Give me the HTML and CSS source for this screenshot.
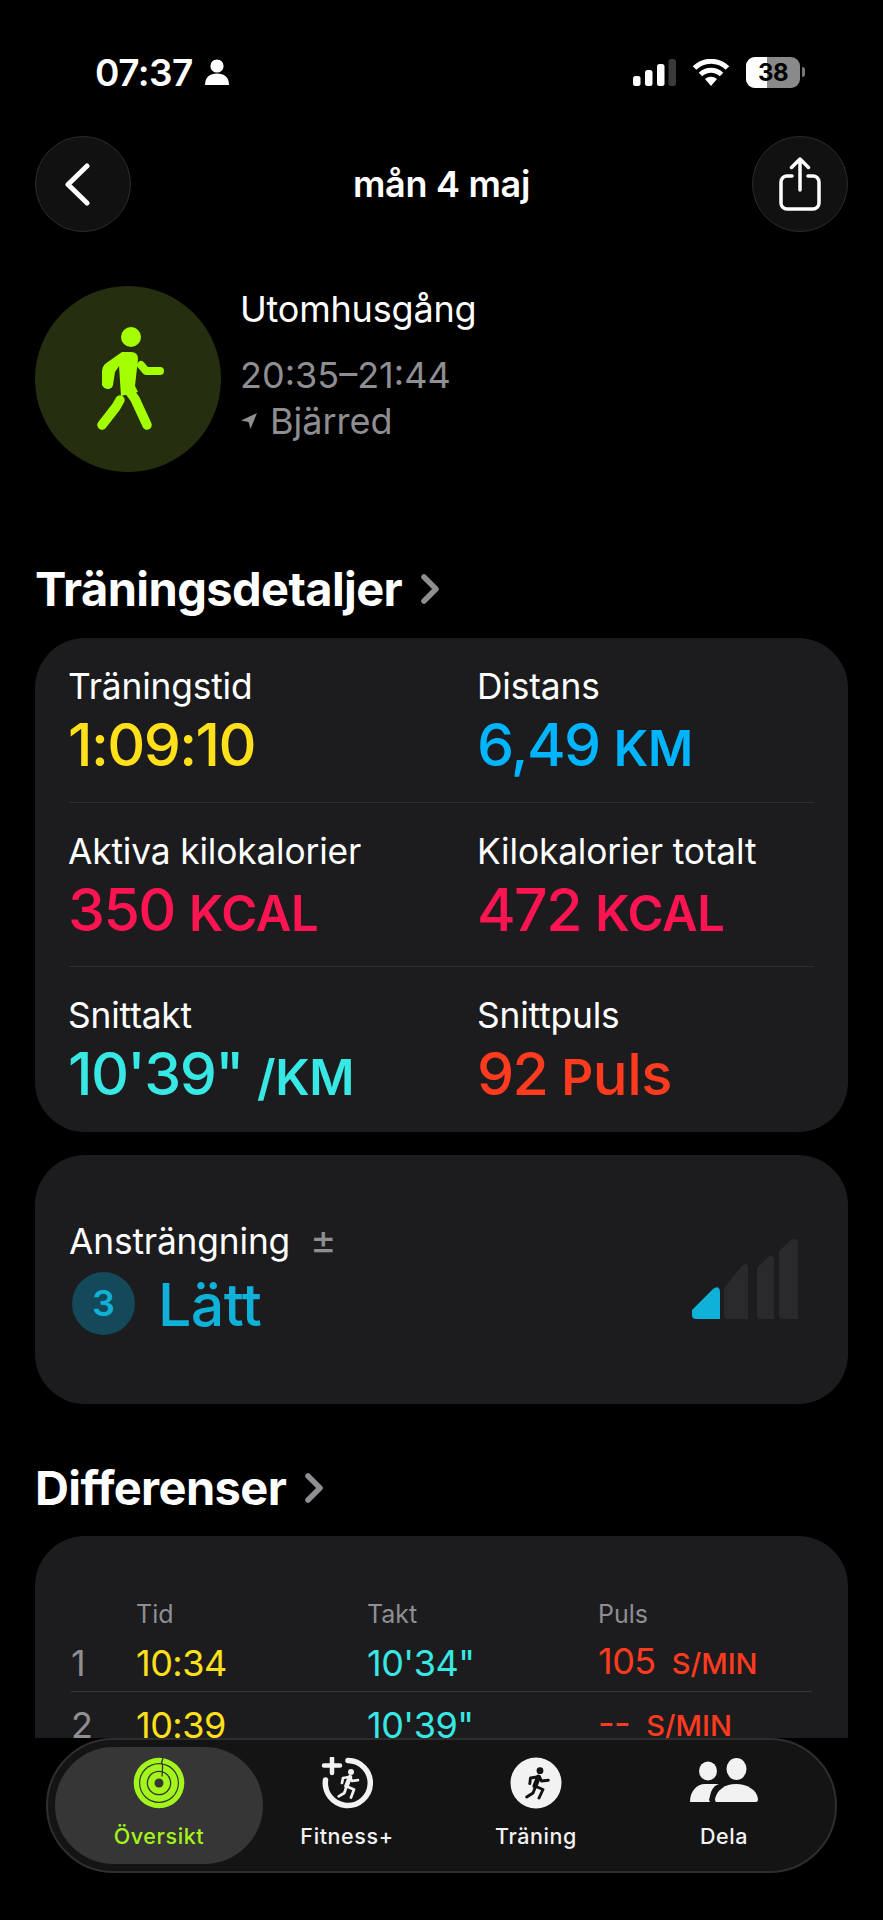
FILE: index.html
```html
<!DOCTYPE html>
<html lang="sv">
<head>
<meta charset="utf-8">
<title>Utomhusgång</title>
<link rel="stylesheet" href="styles.css">
</head>
<body>
<div class="screen">
  <div class="scroll">
    <div class="status">
      <div class="status-left">
        <span class="clock">07:37</span>
        <svg class="person" viewBox="0 0 26 26"><circle cx="13" cy="7" r="6.6"/><path d="M1 26c0-8 5-11.500 12-11.500S25 18 25 26z"/></svg>
      </div>
      <div class="status-right">
        <svg class="signal" viewBox="0 0 43 27"><rect x="0" y="17" width="7.500" height="10" rx="2.500" fill="#fff"/><rect x="12" y="11" width="7.500" height="16" rx="2.500" fill="#fff"/><rect x="24" y="5" width="7.500" height="22" rx="2.500" fill="#fff"/><rect x="35.500" y="0" width="7.500" height="27" rx="2.500" fill="#3a3a3c"/></svg>
        <svg class="wifi" viewBox="0 0 38 27"><path d="M19 27l-6-7a9 9 0 0 1 12 0z" fill="#fff"/><path d="M8.500 15.500a15 15 0 0 1 21 0" stroke="#fff" stroke-width="5" fill="none"/><path d="M2.500 9a23.500 23.500 0 0 1 33 0" stroke="#fff" stroke-width="5" fill="none"/></svg>
        <div class="battery"><span class="battery-level"></span><span class="battery-num">38</span></div>
        <span class="battery-tip"></span>
      </div>
    </div>

    <div class="nav">
      <button class="round-btn">
        <svg class="back-icon" viewBox="0 0 27 43"><path d="M23 3 4 21.500 23 40" fill="none" stroke="#fff" stroke-width="5" stroke-linecap="round" stroke-linejoin="round"/></svg>
      </button>
      <div class="nav-title">mån 4 maj</div>
      <button class="round-btn">
        <svg class="share-icon" viewBox="0 0 42 54"><path d="M13 19H8a6 6 0 0 0-6 6v21a6 6 0 0 0 6 6h26a6 6 0 0 0 6-6V25a6 6 0 0 0-6-6h-5" fill="none" stroke="#fff" stroke-width="3.500" stroke-linecap="round"/><path d="M21 33V3M12.500 10.500 21 2l8.500 8.500" fill="none" stroke="#fff" stroke-width="3.500" stroke-linecap="round" stroke-linejoin="round"/></svg>
      </button>
    </div>

    <div class="workout">
      <div class="workout-badge">
        <svg viewBox="0 0 186 186" class="walker">
          <circle cx="96" cy="51" r="10"/>
          <path d="M87 66h9q7 0 7 7l-3 27 3 6-17 4-2-30-4 6-2 13q-1 4-5 4t-6-4v-14q0-4 3-7z"/>
          <path d="M106 79l5 6h14" fill="none" stroke="#a4ff00" stroke-width="8" stroke-linecap="round" stroke-linejoin="round"/>
          <path d="M92 102l8 11 12 26" fill="none" stroke="#a4ff00" stroke-width="9.500" stroke-linecap="round" stroke-linejoin="round"/>
          <path d="M85 114l-4 7-14 18" fill="none" stroke="#a4ff00" stroke-width="9.500" stroke-linecap="round" stroke-linejoin="round"/>
        </svg>
      </div>
      <div class="workout-info">
        <div class="workout-name">Utomhusgång</div>
        <div class="workout-time">20:35–21:44</div>
        <div class="workout-place">
          <svg class="loc-icon" viewBox="0 0 18 18"><path d="M17 1 1 8.500l7.500 1.500L10.500 17z" fill="#8e8e93"/></svg>
          Bjärred
        </div>
      </div>
    </div>

    <h2 class="section-title section-first">Träningsdetaljer <svg class="chev" viewBox="0 0 20 32"><path d="M4 4l12 12L4 28" fill="none" stroke="#8e8e93" stroke-width="5.500" stroke-linecap="round" stroke-linejoin="round"/></svg></h2>

    <div class="card details">
      <div class="metric-row">
        <div class="metric"><div class="metric-label">Träningstid</div><div class="metric-value c-yellow">1:09:10</div></div>
        <div class="metric"><div class="metric-label">Distans</div><div class="metric-value c-blue">6,49 <span class="unit">KM</span></div></div>
      </div>
      <div class="metric-row">
        <div class="metric"><div class="metric-label">Aktiva kilokalorier</div><div class="metric-value c-pink">350 <span class="unit">KCAL</span></div></div>
        <div class="metric"><div class="metric-label">Kilokalorier totalt</div><div class="metric-value c-pink">472 <span class="unit">KCAL</span></div></div>
      </div>
      <div class="metric-row">
        <div class="metric"><div class="metric-label">Snittakt</div><div class="metric-value c-cyan">10'39" <span class="unit">/KM</span></div></div>
        <div class="metric"><div class="metric-label">Snittpuls</div><div class="metric-value c-red">92 <span class="unit">P</span><span class="unit-lower">uls</span></div></div>
      </div>
    </div>

    <div class="card effort">
      <div>
        <div class="metric-label">Ansträngning <span class="plusminus">±</span></div>
        <div class="effort-value">
          <span class="effort-num">3</span>
          <span class="effort-text">Lätt</span>
        </div>
      </div>
      <svg class="effort-bars" viewBox="0 0 106 81">
        <path d="M0 72l21-21q7-5 7 4v26H4q-4 0-4-4z" fill="#0fb1d8"/>
        <path d="M32 50 50 28q6-5 6 3v50H36q-4 0-4-4z" fill="#2a2a2d"/>
        <path d="M65 30 76 19q6-3 6 3v59H69q-4 0-4-4z" fill="#2a2a2d"/>
        <path d="M87 13 99 2q7-3 7 3v76H91q-4 0-4-4z" fill="#2a2a2d"/>
      </svg>
    </div>

    <h2 class="section-title section-second">Differenser <svg class="chev" viewBox="0 0 20 32"><path d="M4 4l12 12L4 28" fill="none" stroke="#8e8e93" stroke-width="5.500" stroke-linecap="round" stroke-linejoin="round"/></svg></h2>

    <div class="card splits">
      <div class="split-head">
        <span></span><span>Tid</span><span>Takt</span><span>Puls</span>
      </div>
      <div class="split-row">
        <span class="split-idx">1</span><span class="c-yellow">10:34</span><span class="c-cyan">10'34"</span>
        <span class="c-red">105<span class="split-unit">S/MIN</span></span>
      </div>
      <div class="split-row">
        <span class="split-idx">2</span><span class="c-yellow">10:39</span><span class="c-cyan">10'39"</span>
        <span class="c-red">--<span class="split-unit">S/MIN</span></span>
      </div>
    </div>
  </div>

  <nav class="tabbar">
    <div class="tab tab-active">
      <svg class="tab-icon" viewBox="0 0 52 52">
        <circle cx="26" cy="26" r="25.300" fill="#a4f51b"/>
        <circle cx="26" cy="26" r="20" fill="#363636"/>
        <circle cx="26" cy="26" r="18.800" fill="#a4f51b"/>
        <circle cx="26" cy="26" r="12.300" fill="#363636"/>
        <circle cx="26" cy="26" r="11" fill="#a4f51b"/>
        <circle cx="26" cy="26" r="4.500" fill="#363636"/>
        <path d="M30 1 28.500 6l1 1.500V12l-.5 7.500" fill="none" stroke="#363636" stroke-width="1.300"/>
      </svg>
      <span class="tab-label">Översikt</span>
    </div>
    <div class="tab">
      <svg class="tab-icon" viewBox="0 0 52 52">
        <path d="M27 3.500A22.500 22.500 0 1 1 4.500 23" fill="none" stroke="#f2f2f2" stroke-width="5.500" stroke-linecap="round"/>
        <path d="M11 1v15M3 8.500h16" stroke="#f2f2f2" stroke-width="4.500" fill="none" stroke-linecap="round"/>
        <circle cx="30" cy="15" r="3" fill="#f2f2f2"/>
        <path d="M29 20l-3.500 9" fill="none" stroke="#f2f2f2" stroke-width="4.500" stroke-linecap="round"/>
        <path d="M28 20l-6 1-1 5M29.500 21l1.500 3 6-.8M26 29.500l7 3-3 8M25 31l-1.700 5-5.600 3.300" fill="none" stroke="#f2f2f2" stroke-width="2.700" stroke-linecap="round" stroke-linejoin="round"/>
      </svg>
      <span class="tab-label">Fitness+</span>
    </div>
    <div class="tab">
      <svg class="tab-icon" viewBox="0 0 52 52">
        <circle cx="26" cy="26" r="25.500" fill="#f2f2f2"/>
        <circle cx="30" cy="13.700" r="3.400" fill="#111"/>
        <path d="M28.500 20l-3.500 9" fill="none" stroke="#111" stroke-width="5" stroke-linecap="round"/>
        <path d="M27 20l-6.500 1-.7 5.500M30 21l1.500 3 6.800-.8M26 29.500l7 3-4 8.500M25 31l-2 5-6.300 4" fill="none" stroke="#111" stroke-width="2.900" stroke-linecap="round" stroke-linejoin="round"/>
      </svg>
      <span class="tab-label">Träning</span>
    </div>
    <div class="tab">
      <svg class="tab-icon tab-icon-wide" viewBox="0 0 70 52">
        <ellipse cx="19" cy="14" rx="9" ry="9.500" fill="#f2f2f2"/>
        <ellipse cx="47.500" cy="12" rx="10" ry="11" fill="#f2f2f2"/>
        <path d="M1 45c0-11 7-18 15-18h14q-5 1-8 8l-2 8 1 2z" fill="#f2f2f2"/>
        <path d="M27 45q-1 0-1-3c2-9 10-15 21-15s21 6 22 15q0 3-2 3z" fill="#f2f2f2"/>
      </svg>
      <span class="tab-label">Dela</span>
    </div>
  </nav>
</div>
</body>
</html>
```

FILE: styles.css
```css
* { box-sizing: border-box; }
html, body { margin: 0; padding: 0; background: #000; }
body { font-family: Inter, "Noto Sans", "Liberation Sans", sans-serif; color: #fff; }
.screen { position: relative; width: 883px; height: 1920px; overflow: hidden; background: #000; }
.scroll { height: 1738px; overflow: hidden; padding: 0 35px; }

.status { display: flex; justify-content: space-between; align-items: center; height: 72px; margin-top: 36px; padding: 0 43px 0 60px; }
.status-left { display: flex; align-items: center; gap: 11px; }
.clock { font-size: 37px; font-weight: 600; letter-spacing: -0.5px; line-height: 1; }
.person { width: 26px; height: 26px; fill: #fff; }
.status-right { display: flex; align-items: center; }
.signal { width: 43px; height: 27px; }
.wifi { width: 38px; height: 27px; margin-left: 16px; }
.battery { position: relative; width: 54px; height: 31px; margin-left: 16px; border-radius: 9px; background: #8a8a8a; overflow: hidden; display: flex; align-items: center; justify-content: center; }
.battery-level { position: absolute; left: 0; top: 0; bottom: 0; width: 21px; background: #fff; }
.battery-num { position: relative; color: #000; font-size: 24px; font-weight: 700; letter-spacing: -0.5px; }
.battery-tip { width: 3px; height: 10px; margin-left: 2px; border-radius: 0 3px 3px 0; background: #777; }

.nav { display: flex; justify-content: space-between; align-items: center; margin-top: 28px; }
.round-btn { width: 96px; height: 96px; padding: 0; border-radius: 50%; border: 1px solid #2b2b2b; background: #111; display: flex; align-items: center; justify-content: center; }
.back-icon { width: 27px; height: 43px; margin-left: -12px; }
.share-icon { width: 42px; height: 54px; margin-top: 0; }
.nav-title { font-size: 36px; font-weight: 600; letter-spacing: -0.3px; }

.workout { display: flex; margin-top: 54px; gap: 19px; }
.workout-badge { width: 186px; height: 186px; border-radius: 50%; background: #252f10; }
.walker { display: block; width: 186px; height: 186px; fill: #a4ff00; }
.workout-info { font-size: 36px; line-height: 46px; }
.workout-name { margin-bottom: 20px; letter-spacing: -0.2px; }
.workout-time, .workout-place { color: #8e8e93; }
.workout-place { display: flex; align-items: center; gap: 12px; }
.loc-icon { width: 18px; height: 18px; }

.section-title { display: flex; align-items: center; gap: 18px; margin: 0; font-size: 47px; font-weight: 700; letter-spacing: -0.6px; line-height: 56px; padding-top: 20px; }
.section-first { margin-top: 69px; }
.section-second { margin-top: 36px; }
.chev { width: 20px; height: 32px; }

.card { background: #1c1c1e; border-radius: 50px; }
.details { margin-top: 21px; padding: 0 34px; height: 494px; display: flex; flex-direction: column; }
.metric-row { display: grid; grid-template-columns: 409px 1fr; height: 165px; padding-top: 26px; border-bottom: 1px solid #2e2e30; }
.metric-row:last-child { border-bottom: 0; }
.metric { margin-left: -1px; }
.metric-label { font-size: 35.3px; line-height: 46px; letter-spacing: -0.15px; color: #fff; white-space: nowrap; }
.metric-value { font-size: 59px; font-weight: 500; line-height: 66px; letter-spacing: -1.6px; margin-top: 2px; white-space: nowrap; }
.unit { font-size: 49px; font-weight: 600; letter-spacing: -0.3px; }
.unit-lower { font-size: 58px; font-weight: 500; letter-spacing: -0.5px; }
.c-yellow { color: #ffe01a; }
.c-blue { color: #00b5ff; }
.c-pink { color: #ff1452; }
.c-cyan { color: #38e8e4; }
.c-red { color: #ff3b1f; }

.effort { margin-top: 23px; height: 249px; padding: 64px 50px 0 34px; display: flex; justify-content: space-between; align-items: flex-start; }
.plusminus { margin-left: 10px; color: #8e8e93; font-size: 40px; line-height: 40px; }
.effort-value { display: flex; align-items: center; gap: 23px; margin-top: 3px; padding-left: 3px; }
.effort-num { width: 63px; height: 63px; border-radius: 50%; background: #14495a; color: #0fb1d8; display: flex; align-items: center; justify-content: center; font-size: 36px; font-weight: 600; }
.effort-text { font-size: 59px; font-weight: 500; line-height: 66px; color: #0fb1d8; letter-spacing: -0.5px; margin-top: 4px; }
.effort-bars { width: 106px; height: 81px; margin-top: 19px; }

.splits { margin-top: 20px; padding: 63px 36px 0 36px; height: 260px; }
.split-head, .split-row { display: grid; grid-template-columns: 65px 231px 231px 1fr; align-items: center; }
.split-head { color: #8e8e93; font-size: 25px; line-height: 30px; }
.split-row { font-size: 36px; line-height: 62px; height: 62px; font-weight: 400; letter-spacing: -0.5px; border-bottom: 1px solid #38383a; }
.split-row:nth-child(2) { margin-top: 1px; }
.split-idx { color: #8e8e93; }
.split-unit { margin-left: 16px; font-size: 29px; font-weight: 500; letter-spacing: 0; }

.tabbar { position: absolute; left: 46px; top: 1738px; width: 791px; height: 135px; padding: 7px; border: 2px solid #2e2e2e; border-radius: 68px; background: #141414; display: grid; grid-template-columns: 208px 168px 210px 166px; }
.tab { display: flex; flex-direction: column; align-items: center; padding-top: 10px; color: #f2f2f2; }
.tab-active { background: #363636; border-radius: 59px; color: #a4f51b; }
.tab-icon { width: 52px; height: 52px; display: block; }
.tab-icon-wide { width: 70px; }
.tab-label { margin-top: 14px; font-size: 21.5px; font-weight: 500; letter-spacing: 0.6px; line-height: 26px; }
```
